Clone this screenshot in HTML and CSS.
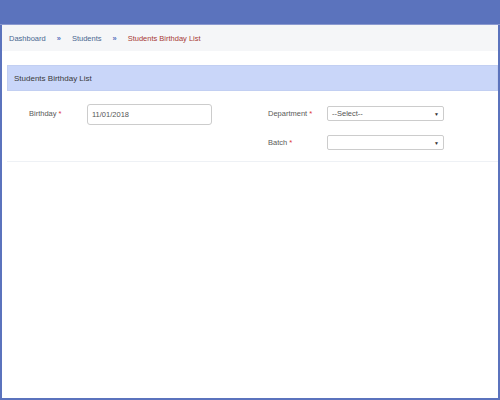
FILE: index.html
```html
<!DOCTYPE html>
<html>
<head>
<meta charset="utf-8">
<link rel="stylesheet" href="styles.css">
</head>
<body>
<div class="frame">
  <header class="topbar"></header>
  <nav class="crumbs">
    <a class="crumb">Dashboard</a>
    <span class="sep">»</span>
    <a class="crumb">Students</a>
    <span class="sep">»</span>
    <span class="current">Students Birthday List</span>
  </nav>
  <main class="content">
    <section class="panel">
      <div class="panel-head">Students Birthday List</div>
      <div class="panel-body">
        <div class="col col-left">
          <div class="row">
            <label class="lbl lbl-birth">Birthday <span class="req">*</span></label>
            <div class="input">11/01/2018</div>
          </div>
        </div>
        <div class="col col-right">
          <div class="row row-c">
            <label class="lbl lbl-right">Department <span class="req">*</span></label>
            <div class="select">--Select--<span class="caret">▼</span></div>
          </div>
          <div class="row row-c">
            <label class="lbl lbl-right">Batch <span class="req">*</span></label>
            <div class="select"><span class="caret">▼</span></div>
          </div>
        </div>
      </div>
    </section>
  </main>
</div>
</body>
</html>
```
FILE: styles.css
```css
* { box-sizing: border-box; }
html, body { margin: 0; padding: 0; }
body {
  width: 500px;
  height: 400px;
  font-family: "Liberation Sans", Arial, sans-serif;
  font-size: 7.5px;
  color: #333;
  background: #fff;
}
.frame {
  width: 500px;
  height: 400px;
  border: 2px solid #5b73bd;
  border-top: 0;
  display: flex;
  flex-direction: column;
  background: #fff;
}
.topbar {
  height: 25px;
  background: #5b73bd;
  margin: 0 -2px;
  flex: none;
  border-bottom: 1px solid #8b9ad0;
}
.crumbs {
  height: 26px;
  background: #f5f6f8;
  display: flex;
  align-items: center;
  padding-left: 7px;
  flex: none;
}
.crumb { color: #4a6890; }
.sep { color: #5b73bd; margin: 0 11px; font-weight: bold; }
.current { color: #a83a35; }
.content {
  padding: 14px 0 0 5px;
}
.panel {
  border-bottom: 1px solid #eef1f5;
}
.panel-head {
  height: 26px;
  background: #c9d6f9;
  border: 1px solid #c2cff2;
  display: flex;
  align-items: center;
  padding-left: 6px;
  color: #3a3a3a;
  font-size: 8px;
}
.panel-body {
  display: flex;
  padding: 13px 0 0 0;
  height: 70px;
}
.col { display: flex; flex-direction: column; }
.col-left { width: 261px; }
.col-right { padding-top: 2px; gap: 14px; }
.row { display: flex; align-items: flex-start; }
.row-c { align-items: center; }
.lbl { color: #5a5a5a; }
.lbl-birth { width: 58px; margin-left: 22px; padding-top: 5px; }
.lbl-right { width: 59px; }
.req { color: #d33; }
.input {
  width: 125px;
  height: 21px;
  border: 1px solid #ccc;
  border-radius: 3px;
  padding: 0 0 0 4px;
  display: flex;
  align-items: center;
  color: #555;
}
.select {
  width: 117px;
  height: 15px;
  border: 1px solid #ccc;
  border-radius: 2px;
  padding: 0 0 0 4px;
  display: flex;
  align-items: center;
  position: relative;
  color: #555;
}
.caret {
  position: absolute;
  right: 4px;
  top: 4px;
  font-size: 5px;
  color: #333;
}
```
